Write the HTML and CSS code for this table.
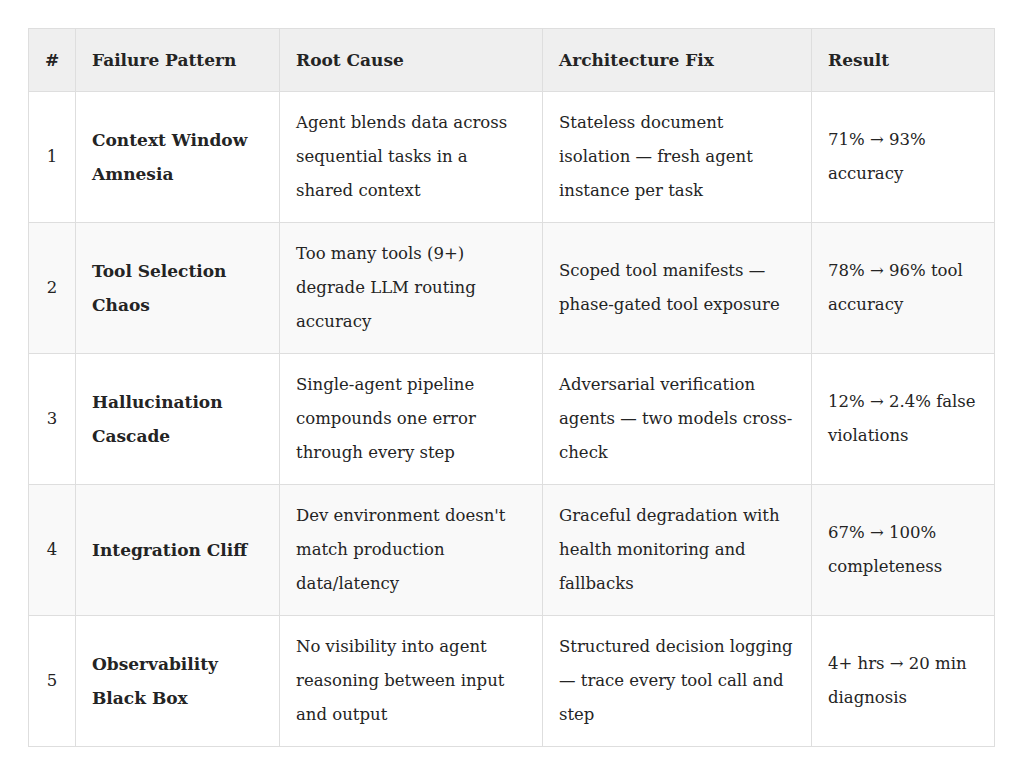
FILE: index.html
```html
<!DOCTYPE html>
<html lang="en">
    <head>
        <meta charset="utf-8"/>
        <title>Failure Patterns</title>
        <link rel="stylesheet" href="styles.css">
    </head>
    <body>
        <table class="patterns">
            <colgroup>
                <col class="col-num">
                <col class="col-pattern">
                <col class="col-cause">
                <col class="col-fix">
                <col class="col-result">
            </colgroup>
            <thead>
                <tr>
                    <th class="num">#</th>
                    <th>Failure Pattern</th>
                    <th>Root Cause</th>
                    <th>Architecture Fix</th>
                    <th>Result</th>
                </tr>
            </thead>
            <tbody>
                <tr>
                    <td class="num">1</td>
                    <td class="name">Context Window Amnesia</td>
                    <td>Agent blends data across sequential tasks in a shared context</td>
                    <td>Stateless document isolation — fresh agent instance per task</td>
                    <td>71% → 93% accuracy</td>
                </tr>
                <tr>
                    <td class="num">2</td>
                    <td class="name">Tool Selection Chaos</td>
                    <td>Too many tools (9+) degrade LLM routing accuracy</td>
                    <td>Scoped tool manifests — phase-gated tool exposure</td>
                    <td>78% → 96% tool accuracy</td>
                </tr>
                <tr>
                    <td class="num">3</td>
                    <td class="name">Hallucination Cascade</td>
                    <td>Single-agent pipeline compounds one error through every step</td>
                    <td>Adversarial verification agents — two models cross-check</td>
                    <td>12% → 2.4% false violations</td>
                </tr>
                <tr>
                    <td class="num">4</td>
                    <td class="name">Integration Cliff</td>
                    <td>Dev environment doesn't match production data/latency</td>
                    <td>Graceful degradation with health monitoring and fallbacks</td>
                    <td>67% → 100% completeness</td>
                </tr>
                <tr>
                    <td class="num">5</td>
                    <td class="name">Observability Black Box</td>
                    <td>No visibility into agent reasoning between input and output</td>
                    <td>Structured decision logging — trace every tool call and step</td>
                    <td>4+ hrs → 20 min diagnosis</td>
                </tr>
            </tbody>
        </table>
    </body>
</html>
```

FILE: styles.css
```css
body { margin: 0; padding: 28px; background: #fff; }

.patterns {
    width: 967px; border-collapse: collapse; table-layout: fixed;
    font-family: "DejaVu Serif", "Liberation Serif", serif;
    font-size: 16.5px; line-height: 34px; color: #242424;
}
.col-num { width: 47px; }
.col-pattern { width: 204px; }
.col-cause { width: 263px; }
.col-fix { width: 269px; }
.col-result { width: 183px; }

.patterns th, .patterns td {
    border: 1px solid #dedede;
    padding: 14px 16px; text-align: left; vertical-align: middle;
}
.patterns th { background: #efefef; font-weight: bold; font-size: 17px; }
.patterns th.num, .patterns td.num { text-align: center; padding: 14px 0; }
.patterns td.name { font-weight: bold; font-size: 17px; }
.patterns tbody tr:nth-of-type(even) { background: #f9f9f9; }
```
